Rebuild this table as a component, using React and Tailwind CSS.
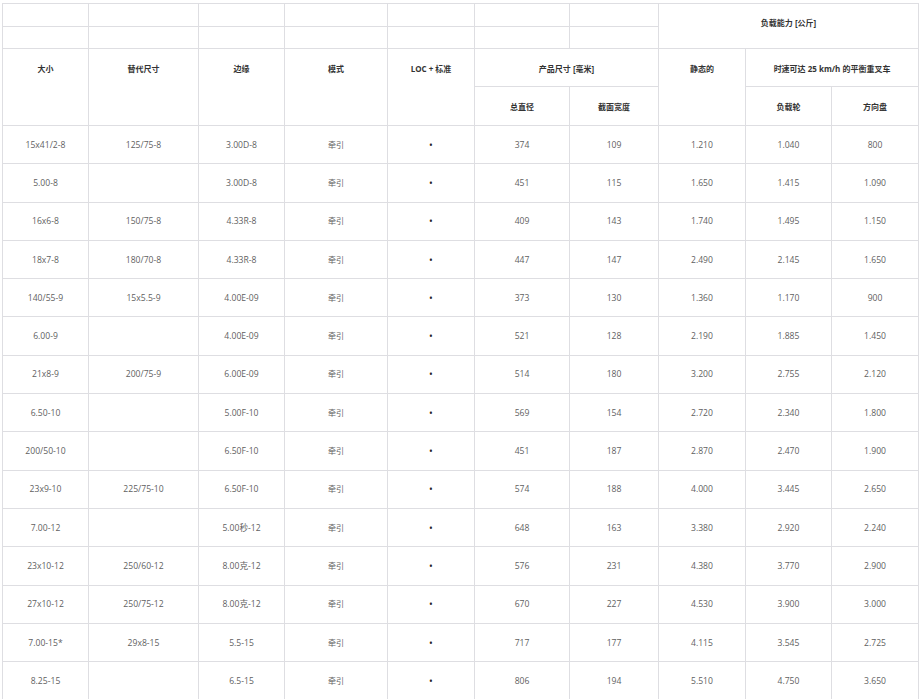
const rows = [
  ["15x41/2-8", "125/75-8", "3.00D-8", "374", "109", "1.210", "1.040", "800"],
  ["5.00-8", "", "3.00D-8", "451", "115", "1.650", "1.415", "1.090"],
  ["16x6-8", "150/75-8", "4.33R-8", "409", "143", "1.740", "1.495", "1.150"],
  ["18x7-8", "180/70-8", "4.33R-8", "447", "147", "2.490", "2.145", "1.650"],
  ["140/55-9", "15x5.5-9", "4.00E-09", "373", "130", "1.360", "1.170", "900"],
  ["6.00-9", "", "4.00E-09", "521", "128", "2.190", "1.885", "1.450"],
  ["21x8-9", "200/75-9", "6.00E-09", "514", "180", "3.200", "2.755", "2.120"],
  ["6.50-10", "", "5.00F-10", "569", "154", "2.720", "2.340", "1.800"],
  ["200/50-10", "", "6.50F-10", "451", "187", "2.870", "2.470", "1.900"],
  ["23x9-10", "225/75-10", "6.50F-10", "574", "188", "4.000", "3.445", "2.650"],
  ["7.00-12", "", "5.00秒-12", "648", "163", "3.380", "2.920", "2.240"],
  ["23x10-12", "250/60-12", "8.00克-12", "576", "231", "4.380", "3.770", "2.900"],
  ["27x10-12", "250/75-12", "8.00克-12", "670", "227", "4.530", "3.900", "3.000"],
  ["7.00-15*", "29x8-15", "5.5-15", "717", "177", "4.115", "3.545", "2.725"],
  ["8.25-15", "", "6.5-15", "806", "194", "5.510", "4.750", "3.650"],
];

const widths = [86, 110, 86, 103, 87, 95, 89, 87, 86, 87];

const cell = "border border-[#dedee2] text-center";
const th = `${cell} align-top font-bold text-[#333]`;

const App = () => {
  return (
    <div
      className="bg-white min-h-[699px] pl-[2px] pt-[3px]"
      style={{ fontFamily: '"Open Sans", "Noto Sans CJK SC", sans-serif' }}
    >
      <table className="border-collapse table-fixed w-[917px] text-[8px] leading-[12px]">
        <colgroup>
          {widths.map((w, i) => (
            <col key={i} style={{ width: w }} />
          ))}
        </colgroup>
        <thead>
          <tr className="h-[23px]">
            {[0, 1, 2, 3, 4, 5, 6].map((i) => (
              <th key={i} className={cell}></th>
            ))}
            <th colSpan={3} rowSpan={2} className={`${th} pt-[13px]`}>
              负载能力 [公斤]
            </th>
          </tr>
          <tr className="h-[22px]">
            {[0, 1, 2, 3, 4, 5, 6].map((i) => (
              <th key={i} className={cell}></th>
            ))}
          </tr>
          <tr className="h-[38px]">
            <th rowSpan={2} className={`${th} pt-[14px]`}>大小</th>
            <th rowSpan={2} className={`${th} pt-[14px]`}>替代尺寸</th>
            <th rowSpan={2} className={`${th} pt-[14px]`}>边缘</th>
            <th rowSpan={2} className={`${th} pt-[14px]`}>模式</th>
            <th rowSpan={2} className={`${th} pt-[14px]`}>LOC + 标准</th>
            <th colSpan={2} className={`${th} pt-[14px]`}>产品尺寸 [毫米]</th>
            <th rowSpan={2} className={`${th} pt-[14px]`}>静态的</th>
            <th colSpan={2} className={`${th} pt-[14px]`}>时速可达 25 km/h 的平衡重叉车</th>
          </tr>
          <tr className="h-[39px]">
            <th className={`${th} pt-[14px]`}>总直径</th>
            <th className={`${th} pt-[14px]`}>截面宽度</th>
            <th className={`${th} pt-[14px]`}>负载轮</th>
            <th className={`${th} pt-[14px]`}>方向盘</th>
          </tr>
        </thead>
        <tbody className="text-[#5f5f5f] text-[8.6px]">
          {rows.map((r, i) => (
            <tr key={i} className="h-[38.3px]">
              <td className={cell}>{r[0]}</td>
              <td className={cell}>{r[1]}</td>
              <td className={cell}>{r[2]}</td>
              <td className={`${cell} text-[8px]`}>牵引</td>
              <td className={`${cell} text-[#222] text-[10px] leading-[10px]`}>•</td>
              <td className={cell}>{r[3]}</td>
              <td className={cell}>{r[4]}</td>
              <td className={cell}>{r[5]}</td>
              <td className={cell}>{r[6]}</td>
              <td className={cell}>{r[7]}</td>
            </tr>
          ))}
        </tbody>
      </table>
    </div>
  );
};

export default App;
